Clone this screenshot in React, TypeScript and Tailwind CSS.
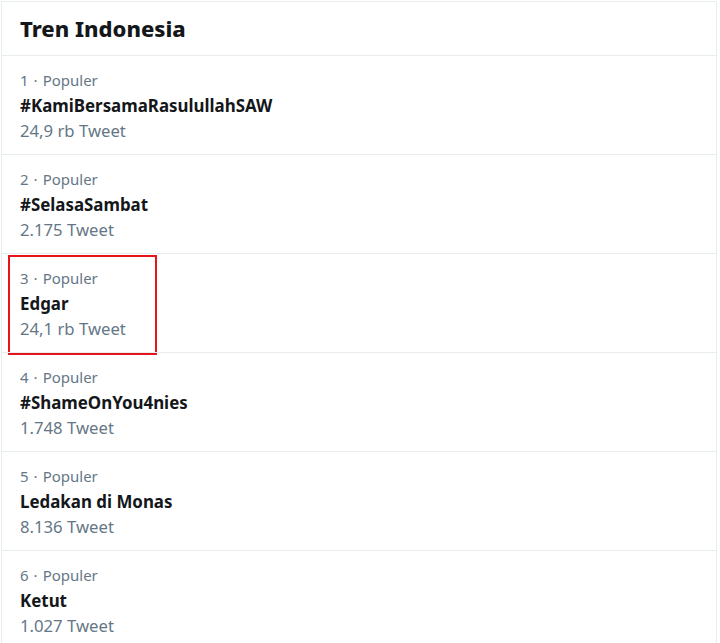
const trends = [
  { rank: 1, name: '#KamiBersamaRasulullahSAW', count: '24,9 rb Tweet' },
  { rank: 2, name: '#SelasaSambat', count: '2.175 Tweet' },
  { rank: 3, name: 'Edgar', count: '24,1 rb Tweet' },
  { rank: 4, name: '#ShameOnYou4nies', count: '1.748 Tweet' },
  { rank: 5, name: 'Ledakan di Monas', count: '8.136 Tweet' },
  { rank: 6, name: 'Ketut', count: '1.027 Tweet' }
]

function TrendRow({ rank, name, count, marked }: { rank: number; name: string; count: string; marked?: boolean }) {
  return (
    <div className="relative border-t border-[#e6ecf0] pt-3 pb-[11px] pl-[18px]">
      <div className="flex h-[25px] items-center text-[15px] text-[#657786]">
        {rank}
        <span className="mx-[5px]">·</span>
        Populer
      </div>
      <div className="flex h-[25px] items-center text-[16.9px] font-bold text-[#14171a]">
        {name}
      </div>
      <div className="flex h-[25px] items-center text-[16.7px] text-[#657786]">
        {count}
      </div>
      {marked && (
        <div className="absolute top-px left-[6px] h-[100px] w-[149px] border-2 border-[#e8141c]" />
      )}
    </div>
  )
}

export default function App() {
  return (
    <div className="h-[643px] w-[720px] overflow-hidden bg-white pt-px pl-px font-['Noto_Sans',sans-serif]">
      <div className="w-[716px] border-x border-t border-[#e6ecf0] bg-white">
        <div className="flex h-[53px] items-center pl-[18px]">
          <h2 className="text-[22px] font-extrabold text-[#14171a]">Tren Indonesia</h2>
        </div>
        {trends.map((t) => (
          <TrendRow key={t.rank} {...t} marked={t.rank === 3} />
        ))}
      </div>
    </div>
  )
}
